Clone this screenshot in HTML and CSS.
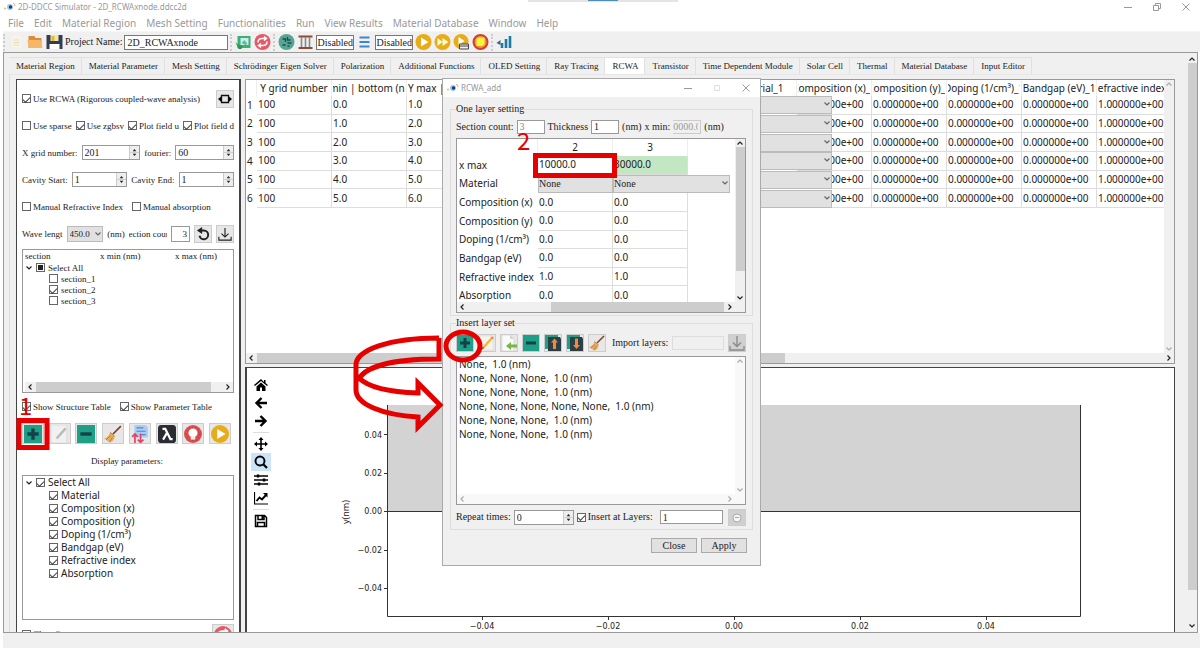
FILE: index.html
```html
<!DOCTYPE html>
<html lang="en">
<head>
<meta charset="utf-8">
<title>2D-DDCC Simulator</title>
<link rel="stylesheet" href="styles.css">
</head>
<body>
<svg class="defs" aria-hidden="true">
  <symbol id="logo" viewBox="0 0 12 10"><circle cx="6" cy="5" r="3" fill="#9cc9ea"/><circle cx="6.500" cy="5" r="1.700" fill="#123f7c"/><circle cx="1" cy="6.500" r="1" fill="#e5c34f"/><path d="M9 1q2 1 2 3" stroke="#e9a06b" fill="none"/></symbol>
  <symbol id="plus" viewBox="0 0 16 16"><path fill="#1f9f86" d="M0 0h16v16H0z"/><path fill="#17414a" d="M6.500 3h3v3.500H13v3H9.500V13h-3V9.500H3v-3h3.500z"/></symbol>
  <symbol id="minus" viewBox="0 0 16 16"><path fill="#1f9f86" d="M0 0h16v16H0z"/><path fill="#17414a" d="M3 6.500h10v3H3z"/></symbol>
  <symbol id="pencil" viewBox="0 0 16 16"><path fill="#f4f3ee" stroke="#d8d6cf" stroke-width=".5" d="M1 1h13v14H1z"/><path d="M4 13l9-10" stroke="#f2bb35" stroke-width="2.600"/><path d="M3 14l1.500-1.500" stroke="#555" stroke-width="1.500"/><path d="M12.500 3.500L14 2" stroke="#e77" stroke-width="2.400"/></symbol>
  <symbol id="pencil-off" viewBox="0 0 16 16"><path fill="#f1f1f1" stroke="#cfcfcf" stroke-width=".5" d="M0 0h14v16H0z"/><path d="M5 12l8-9" stroke="#bbb" stroke-width="2.200"/></symbol>
  <symbol id="broom" viewBox="0 0 16 16"><path d="M8 8l7-7" stroke="#7b3f21" stroke-width="1.500"/><path fill="#e9ad62" d="M5.500 6.500l4 3.500q-.5 5-4.500 5.500L0 12q4-1 5.500-5.500z"/><path d="M5.500 6.500l4 3.500M2 13l4-3.500M5 15l2.500-4" stroke="#b5762f" stroke-width=".8"/></symbol>
  <symbol id="import" viewBox="0 0 16 16"><path fill="#fafafa" stroke="#ccc" stroke-width=".6" d="M1 0h8l4 4v12H1z"/><path fill="#d5d5d5" d="M9 0v4h4z"/><path fill="#76b843" d="M5 11l5-4v2.500h6v3h-6V15z"/></symbol>
  <symbol id="up" viewBox="0 0 16 16"><path fill="#1f9f86" d="M0 0h13v14H0z"/><path fill="#2c3f46" d="M3 2h12l1 2v12H3z"/><path fill="#ef8b3a" d="M9.500 3.500l3.500 4h-2V14H8V7.500H6z"/></symbol>
  <symbol id="down" viewBox="0 0 16 16"><path fill="#1f9f86" d="M0 0h13v14H0z"/><path fill="#2c3f46" d="M3 2h12l1 2v12H3z"/><path fill="#ef8b3a" d="M9.500 14l3.500-4h-2V3.500H8V10H6z"/></symbol>
  <symbol id="sort" viewBox="0 0 16 16"><path fill="#a9cdf3" d="M3 0h10l2 2v9H3z"/><path d="M5 2.500h6M5 5.500h8M9 8.500h4" stroke="#4d85ca"/><path fill="none" stroke="#e83f62" stroke-width="1.500" d="M3.500 16V8M1 10.500L3.500 8 6 10.500M8.500 7.500v8M6 13l2.500 2.500L11 13"/></symbol>
  <symbol id="lambda" viewBox="0 0 16 16"><rect width="16" height="16" rx="3" fill="#2b2b33"/><path d="M4 3.500h2.500L11 12.500h2M8 7l-3.500 6" stroke="#fff" stroke-width="1.900" fill="none"/></symbol>
  <symbol id="life" viewBox="0 0 16 16"><circle cx="8" cy="8" r="8" fill="#dc4f51"/><circle cx="8" cy="8" r="6" fill="none" stroke="#b93c44" stroke-dasharray="1 2"/><circle cx="8" cy="7" r="4" fill="#fff"/><path fill="#eee" d="M6 10h4v3H6z"/></symbol>
  <symbol id="play" viewBox="0 0 16 16"><circle cx="8" cy="8" r="8" fill="#e7ac17"/><path fill="#fff" d="M5.500 3.500L13 8l-7.500 4.500z"/></symbol>
  <symbol id="ff" viewBox="0 0 16 16"><circle cx="8" cy="8" r="8" fill="#e7ac17"/><path fill="#fffbd0" d="M3 4l5 4-5 4zM8 4l6 4-6 4z"/></symbol>
  <symbol id="play-card" viewBox="0 0 16 16"><circle cx="7.500" cy="7.500" r="7.500" fill="#e7ac17"/><path fill="#fff" d="M5 3l6 4-6 4z"/><path fill="#eee" stroke="#444" d="M6 10h9v5H6z"/><path d="M6 12h9" stroke="#444"/></symbol>
  <symbol id="stop" viewBox="0 0 16 16"><circle cx="8" cy="8" r="7" fill="#e89b2c" stroke="#d63d37" stroke-width="2"/><path fill="#fff33b" d="M4 5.500L6 3.500h6v6.500l-2 2H4z"/></symbol>
  <symbol id="refresh" viewBox="0 0 16 16"><circle cx="8" cy="8" r="8" fill="#e95866"/><path fill="none" stroke="#fff" stroke-width="1.500" d="M3.500 8.500q0-4 4-4h4M9.500 2.500l2.500 2-2.500 2M12.500 7.500q0 4-4 4h-4M6.500 13.500l-2.500-2 2.500-2"/></symbol>
  <symbol id="doc" viewBox="0 0 16 16"><path fill="#f7f3e6" d="M3 1h7l3 3v11H3z"/><path d="M5 6h6M5 8.500h6M5 11h6" stroke="#e7dcc0"/></symbol>
  <symbol id="folder" viewBox="0 0 16 16"><path fill="#d98e39" d="M1 2h6l1 2h6v10H1z"/><path fill="#f6b866" d="M0 6h13l2 8H1z"/></symbol>
  <symbol id="save" viewBox="0 0 16 16"><path fill="#323d52" d="M0 1h16v14H0z"/><path fill="#f0e6b3" d="M4 1h8v6H4z"/><path fill="#fff" d="M3 10h10v5H3z"/><path fill="#e6b82f" d="M5 2h3v5H5z"/></symbol>
  <symbol id="photo" viewBox="0 0 16 16"><path fill="#3dae75" d="M2 2h13v12H2z"/><path fill="#c8eef0" d="M5 4h8v7H5z"/><path fill="#62bd92" d="M6 9l3-3 3 4-2 1z"/><path fill="#2f9647" d="M0 8l3 3 4 1-1 3H3z"/></symbol>
  <symbol id="mesh" viewBox="0 0 16 16"><circle cx="8" cy="8" r="8" fill="#57a594"/><path d="M4 5h3v3M9 3v3h3M4 11h3M9 9h4M9 12h2" stroke="#184f4a" stroke-width="1.300" fill="none"/></symbol>
  <symbol id="layers" viewBox="0 0 16 16"><path d="M1 2.500h14M1 14h14" stroke="#8c4c35" stroke-width="1.800"/><path d="M4 3v10M8 3v10M12 3v10" stroke="#888" stroke-width="1.600"/></symbol>
  <symbol id="lines" viewBox="0 0 16 16"><path d="M3 3.500h10M3 8h10M3 12.500h10" stroke="#3d86d3" stroke-width="2.200"/></symbol>
  <symbol id="chart" viewBox="0 0 16 16"><path d="M5.500 14V9M9.500 14V5M13.500 14V2" stroke="#187ba8" stroke-width="2.600"/><path fill="#35657b" d="M0 9l4-3v5z"/></symbol>
  <symbol id="resize" viewBox="0 0 16 16"><path fill="none" stroke="#111" stroke-width="1.500" d="M4 4h8v8H4z"/><path d="M0 8l3.500-3v6zM16 8l-3.500-3v6z"/></symbol>
  <symbol id="undo" viewBox="0 0 16 16"><path fill="none" stroke="#222" stroke-width="2.200" d="M5 4h4a5 5 0 1 1-5 6"/><path fill="#222" d="M1 4l6-4v8z"/></symbol>
  <symbol id="download" viewBox="0 0 16 16"><path fill="none" stroke="currentColor" stroke-width="1.300" d="M8 1v10M4 7.500l4 4 4-4M1 11v4h14v-4"/></symbol>
  <symbol id="al" viewBox="0 0 8 8"><path d="M5.500 1.500L3 4l2.500 2.500" fill="none" stroke="currentColor" stroke-width="1.200"/></symbol>
  <symbol id="ar" viewBox="0 0 8 8"><path d="M2.500 1.500L5 4 2.500 6.500" fill="none" stroke="currentColor" stroke-width="1.200"/></symbol>
  <symbol id="au" viewBox="0 0 8 8"><path d="M1.500 5.500L4 3l2.500 2.500" fill="none" stroke="currentColor" stroke-width="1.200"/></symbol>
  <symbol id="ad" viewBox="0 0 8 8"><path d="M1.500 2.500L4 5l2.500-2.500" fill="none" stroke="currentColor" stroke-width="1.200"/></symbol>
  <symbol id="spin" viewBox="0 0 10 12"><path d="M0 6h10" stroke="#ccc"/><path fill="#222" d="M5 2l2 2.500H3zM5 10l2-2.500H3z"/></symbol>
</svg>

<header class="titlebar">
  <svg class="logo"><use href="#logo"/></svg>
  <h1>2D-DDCC Simulator - 2D_RCWAxnode.ddcc2d</h1>
  <span class="snap"><i></i></span>
  <div class="winctl">
    <svg viewBox="0 0 10 10"><path d="M1 5.500h8"/></svg>
    <svg viewBox="0 0 10 10"><path d="M1.500 3.500h5v5h-5zM3.500 3.500v-2h5v5h-2"/></svg>
    <svg viewBox="0 0 10 10"><path d="M1.500 1.500l7 7M8.500 1.500l-7 7"/></svg>
  </div>
</header>
<nav class="menubar"><button>File</button><button>Edit</button><button>Material Region</button><button>Mesh Setting</button><button>Functionalities</button><button>Run</button><button>View Results</button><button>Material Database</button><button>Window</button><button>Help</button></nav>
<div class="toolbar">
  <i class="grip"></i>
  <svg><use href="#doc"/></svg><svg><use href="#folder"/></svg><svg><use href="#save"/></svg>
  <label for="pname">Project Name:</label><input id="pname" class="pname" value="2D_RCWAxnode">
  <i class="grip"></i>
  <svg><use href="#photo"/></svg><svg><use href="#refresh"/></svg>
  <i class="grip"></i>
  <svg><use href="#mesh"/></svg><svg><use href="#layers"/></svg>
  <input class="state" aria-label="Layer state" value="Disabled">
  <svg><use href="#lines"/></svg>
  <input class="state" aria-label="Line state" value="Disabled">
  <svg><use href="#play"/></svg><svg><use href="#ff"/></svg><svg><use href="#play-card"/></svg><svg><use href="#stop"/></svg>
  <i class="grip"></i>
  <svg><use href="#chart"/></svg>
</div>

<main class="workspace">
  <div class="pages">
    <div class="tabs"><button>Material Region</button><button>Material Parameter</button><button>Mesh Setting</button><button>Schrödinger Eigen Solver</button><button>Polarization</button><button>Additional Functions</button><button>OLED Setting</button><button>Ray Tracing</button><button class="on">RCWA</button><button>Transistor</button><button>Time Dependent Module</button><button>Solar Cell</button><button>Thermal</button><button>Material Database</button><button>Input Editor</button></div>
    <div class="columns">
      <section class="side">
        <div class="row"><label><input type="checkbox" checked>Use RCWA (Rigorous coupled-wave analysis)</label><button class="ib push" aria-label="Resize"><svg><use href="#resize"/></svg></button></div>
        <div class="row spread"><label><input type="checkbox">Use sparse</label><label><input type="checkbox" checked>Use zgbsv</label><label><input type="checkbox" checked>Plot field u</label><label><input type="checkbox" checked>Plot field d</label></div>
        <div class="row"><label for="xg">X grid number:</label><span class="spin grow"><input id="xg" value="201"><svg><use href="#spin"/></svg></span><label for="fo">fourier:</label><span class="spin grow"><input id="fo" value="60"><svg><use href="#spin"/></svg></span></div>
        <div class="row"><label for="cs">Cavity Start:</label><span class="spin grow"><input id="cs" value="1"><svg><use href="#spin"/></svg></span><label for="ce">Cavity End:</label><span class="spin grow"><input id="ce" value="1"><svg><use href="#spin"/></svg></span></div>
        <div class="row wide"><label><input type="checkbox">Manual Refractive Index</label><label><input type="checkbox">Manual absorption</label></div>
        <div class="row"><label for="wl">Wave lengt</label><span class="combo wave"><select id="wl"><option>450.0</option></select><svg><use href="#ad"/></svg></span><span>(nm)</span><label class="cut" for="sc"><span>Section count</span></label><input id="sc" class="cnt" value="3"><button class="ib" aria-label="Reset"><svg><use href="#undo"/></svg></button><button class="ib push" aria-label="Load"><svg><use href="#download"/></svg></button></div>
        <div class="box tree small">
          <div class="heads"><span>section</span><span>x min (nm)</span><span>x max (nm)</span></div>
          <div class="item"><svg><use href="#ad"/></svg><label><input type="checkbox" class="part">Select All</label></div>
          <div class="item sub"><label><input type="checkbox">section_1</label></div>
          <div class="item sub"><label><input type="checkbox" checked>section_2</label></div>
          <div class="item sub"><label><input type="checkbox">section_3</label></div>
          <div class="hbar"><svg><use href="#al"/></svg><i class="t1"></i><svg><use href="#ar"/></svg></div>
        </div>
        <div class="row wide"><label><input type="checkbox" checked>Show Structure Table</label><label><input type="checkbox" checked>Show Parameter Table</label></div>
        <div class="row tools"><button class="ib" aria-label="Add"><svg><use href="#plus"/></svg></button><button class="ib" aria-label="Edit"><svg><use href="#pencil-off"/></svg></button><button class="ib" aria-label="Remove"><svg><use href="#minus"/></svg></button><button class="ib" aria-label="Clear"><svg><use href="#broom"/></svg></button><button class="ib" aria-label="Sort"><svg><use href="#sort"/></svg></button><button class="ib" aria-label="Wavelength"><svg><use href="#lambda"/></svg></button><button class="ib" aria-label="Light"><svg><use href="#life"/></svg></button><button class="ib" aria-label="Run"><svg><use href="#play"/></svg></button></div>
        <div class="row mid">Display parameters:</div>
        <div class="box tree large">
          <div class="item"><svg><use href="#ad"/></svg><label><input type="checkbox" checked>Select All</label></div>
          <div class="item sub"><label><input type="checkbox" checked>Material</label></div>
          <div class="item sub"><label><input type="checkbox" checked>Composition (x)</label></div>
          <div class="item sub"><label><input type="checkbox" checked>Composition (y)</label></div>
          <div class="item sub"><label><input type="checkbox" checked>Doping (1/cm³)</label></div>
          <div class="item sub"><label><input type="checkbox" checked>Bandgap (eV)</label></div>
          <div class="item sub"><label><input type="checkbox" checked>Refractive index</label></div>
          <div class="item sub"><label><input type="checkbox" checked>Absorption</label></div>
        </div>
        <div class="row last"><label><input type="checkbox" checked>Clear figure</label><button class="ib push" aria-label="Refresh"><svg><use href="#refresh"/></svg></button></div>
      </section>

      <div class="right">
        <section class="grid">
          <div class="gridrow">
            <div class="clip">
              <table class="layers">
                <colgroup><col class="n"><col class="c"><col class="c"><col class="c"><col class="gap"><col class="c"><col class="c"><col class="c"><col class="c"><col class="c"><col class="c"></colgroup>
                <thead><tr><th></th><th><div>Y grid number</div></th><th><div>Y min | bottom (nm)</div></th><th class="l"><div>Y max | top (nm)</div></th><th></th><th><div>Material_1</div></th><th><div>Composition (x)_1</div></th><th><div>Composition (y)_1</div></th><th><div>Doping (1/cm³)_1</div></th><th><div>Bandgap (eV)_1</div></th><th><div>Refractive index_1</div></th></tr></thead>
                <tbody>
                  <tr><th>1</th><td>100</td><td>0.0</td><td>1.0</td><td></td><td><span class="combo cell"><select aria-label="Material 1"><option>None</option></select><svg><use href="#ad"/></svg></span></td><td>0.000000e+00</td><td>0.000000e+00</td><td>0.000000e+00</td><td>0.000000e+00</td><td>1.000000e+00</td></tr>
                  <tr><th>2</th><td>100</td><td>1.0</td><td>2.0</td><td></td><td><span class="combo cell"><select aria-label="Material 2"><option>None</option></select><svg><use href="#ad"/></svg></span></td><td>0.000000e+00</td><td>0.000000e+00</td><td>0.000000e+00</td><td>0.000000e+00</td><td>1.000000e+00</td></tr>
                  <tr><th>3</th><td>100</td><td>2.0</td><td>3.0</td><td></td><td><span class="combo cell"><select aria-label="Material 3"><option>None</option></select><svg><use href="#ad"/></svg></span></td><td>0.000000e+00</td><td>0.000000e+00</td><td>0.000000e+00</td><td>0.000000e+00</td><td>1.000000e+00</td></tr>
                  <tr><th>4</th><td>100</td><td>3.0</td><td>4.0</td><td></td><td><span class="combo cell"><select aria-label="Material 4"><option>None</option></select><svg><use href="#ad"/></svg></span></td><td>0.000000e+00</td><td>0.000000e+00</td><td>0.000000e+00</td><td>0.000000e+00</td><td>1.000000e+00</td></tr>
                  <tr><th>5</th><td>100</td><td>4.0</td><td>5.0</td><td></td><td><span class="combo cell"><select aria-label="Material 5"><option>None</option></select><svg><use href="#ad"/></svg></span></td><td>0.000000e+00</td><td>0.000000e+00</td><td>0.000000e+00</td><td>0.000000e+00</td><td>1.000000e+00</td></tr>
                  <tr><th>6</th><td>100</td><td>5.0</td><td>6.0</td><td></td><td><span class="combo cell"><select aria-label="Material 6"><option>None</option></select><svg><use href="#ad"/></svg></span></td><td>0.000000e+00</td><td>0.000000e+00</td><td>0.000000e+00</td><td>0.000000e+00</td><td>1.000000e+00</td></tr>
                </tbody>
              </table>
            </div>
            <div class="vbar faint"><svg><use href="#au"/></svg><i></i><svg><use href="#ad"/></svg></div>
          </div>
          <div class="hbar"><svg><use href="#al"/></svg><i class="t2"></i><svg><use href="#ar"/></svg></div>
        </section>
        <section class="plot">
          <div class="nav">
            <svg viewBox="0 0 14 14"><path d="M7 1L0 7l1 1 6-5 6 5 1-1-2.500-2V2H10v2zM7 4.500L2.500 8.500V13H6V9.500h2V13h3.500V8.500z"/></svg>
            <svg viewBox="0 0 14 14"><path d="M13 7H3M7.500 2L2.500 7l5 5" fill="none" stroke="#000" stroke-width="2.400"/></svg>
            <svg viewBox="0 0 14 14"><path d="M1 7h10M6.500 2l5 5-5 5" fill="none" stroke="#000" stroke-width="2.400"/></svg>
            <hr>
            <svg viewBox="0 0 14 14"><path d="M7 1v12M1 7h12" stroke="#000" stroke-width="1.600"/><path d="M7 0l2.500 3h-5zM7 14l2.500-3h-5zM0 7l3-2.500v5zM14 7l-3-2.500v5z"/></svg>
            <svg class="sel" viewBox="0 0 14 14"><circle cx="6" cy="6" r="4.500" fill="none" stroke="#000" stroke-width="1.900"/><path d="M9.500 9.500L13 13" stroke="#000" stroke-width="2.300"/></svg>
            <svg viewBox="0 0 14 14"><path d="M0 3h14M0 7h14M0 11h14" stroke="#000" stroke-width="1.400"/><path d="M4 1.500v3M10 5.500v3M5 9.500v3" stroke="#000" stroke-width="2.400"/></svg>
            <svg viewBox="0 0 14 14"><path d="M.5 1v12H14" fill="none" stroke="#000" stroke-width="1.200"/><path d="M2.500 10l3-3.500 2.500 2L12 4" fill="none" stroke="#000" stroke-width="1.900"/><path d="M9 2h4.500v4.500z"/></svg>
            <hr>
            <svg viewBox="0 0 14 14"><path d="M1.500 1.500h9l2 2v9h-11zM4 1.500v4h6v-4M3.500 12.500v-4h7v4" fill="none" stroke="#000" stroke-width="1.500"/><path d="M7.500 2h2v3h-2z"/></svg>
          </div>
          <svg class="axes">
            <path fill="#d3d3d3" d="M101 37h693v106H101z"/>
            <path class="ax" d="M101.500 37v211.500h693V37M101 143.500h693"/>
            <path class="ax" d="M98 66.500h3M98 105.500h3M98 143.500h3M98 182.500h3M98 220.500h3M196.500 249v3M322.500 249v3M448.500 249v3M574.500 249v3M700.500 249v3"/>
            <g text-anchor="end"><text x="96" y="70">0.04</text><text x="96" y="108">0.02</text><text x="96" y="146">0.00</text><text x="96" y="185">−0.02</text><text x="96" y="223">−0.04</text></g>
            <g text-anchor="middle"><text x="196" y="261">−0.04</text><text x="322" y="261">−0.02</text><text x="448" y="261">0.00</text><text x="574" y="261">0.02</text><text x="700" y="261">0.04</text></g>
            <text class="yl" transform="translate(63 144) rotate(-90)" text-anchor="middle">y(nm)</text>
          </svg>
        </section>
      </div>
    </div>
  </div>
  <div class="vbar outer"><svg><use href="#au"/></svg><i></i><svg><use href="#ad"/></svg></div>
</main>
<footer class="status"></footer>

<div class="dialog" role="dialog" aria-label="RCWA_add">
  <div class="dtitle"><svg class="logo"><use href="#logo"/></svg><h2>RCWA_add</h2>
    <div class="winctl"><svg viewBox="0 0 10 10"><path d="M1 5.500h8"/></svg><svg class="dim" viewBox="0 0 10 10"><path d="M2.500 2.500h5v5h-5z"/></svg><svg viewBox="0 0 10 10"><path d="M1.500 1.500l7 7M8.500 1.500l-7 7"/></svg></div>
  </div>
  <div class="dbody">
    <fieldset>
      <legend>One layer setting</legend>
      <div class="drow"><label for="dsc">Section count:</label><input id="dsc" class="w28 off" value="3"><label for="dth">Thickness</label><input id="dth" class="w28" value="1"><span>(nm)</span><label for="dxm">x min:</label><span class="xmin"><input id="dxm" value="20000.0" disabled></span><span>(nm)</span></div>
      <div class="box params">
        <div class="gridrow">
          <div class="clip">
            <table class="ptable">
              <colgroup><col class="h"><col class="c"><col class="c"></colgroup>
              <thead><tr><th></th><th>2</th><th>3</th></tr></thead>
              <tbody>
                <tr><th>x max</th><td>10000.0</td><td class="green">30000.0</td></tr>
                <tr><th>Material</th><td><span class="combo pcell"><select aria-label="Material, section 2"><option>None</option></select></span></td><td><span class="combo pcell pwide"><select aria-label="Material, section 3"><option>None</option></select><svg><use href="#ad"/></svg></span></td></tr>
                <tr><th>Composition (x)</th><td>0.0</td><td>0.0</td></tr>
                <tr><th>Composition (y)</th><td>0.0</td><td>0.0</td></tr>
                <tr><th>Doping (1/cm³)</th><td>0.0</td><td>0.0</td></tr>
                <tr><th>Bandgap (eV)</th><td>0.0</td><td>0.0</td></tr>
                <tr><th>Refractive index</th><td>1.0</td><td>1.0</td></tr>
                <tr><th>Absorption</th><td>0.0</td><td>0.0</td></tr>
              </tbody>
            </table>
          </div>
          <div class="vbar pv"><svg><use href="#au"/></svg><i></i><svg><use href="#ad"/></svg></div>
        </div>
        <div class="hbar phb"><svg><use href="#al"/></svg><i class="t3"></i><svg><use href="#ar"/></svg></div>
      </div>
    </fieldset>
    <fieldset>
      <legend>Insert layer set</legend>
      <div class="dtools"><button class="ib" aria-label="Add layer"><svg><use href="#plus"/></svg></button><button class="ib" aria-label="Edit layer"><svg><use href="#pencil"/></svg></button><button class="ib" aria-label="Insert layer"><svg><use href="#import"/></svg></button><button class="ib" aria-label="Remove layer"><svg><use href="#minus"/></svg></button><button class="ib" aria-label="Move up"><svg><use href="#up"/></svg></button><button class="ib" aria-label="Move down"><svg><use href="#down"/></svg></button><button class="ib" aria-label="Clear layers"><svg><use href="#broom"/></svg></button><label for="imp">Import layers:</label><input id="imp" class="imp" disabled><button class="ib off" aria-label="Import" disabled><svg><use href="#download"/></svg></button></div>
      <div class="box list">
        <div class="gridrow">
          <ul><li>None,&nbsp; 1.0 (nm)</li><li>None, None, None,&nbsp; 1.0 (nm)</li><li>None, None, None,&nbsp; 1.0 (nm)</li><li>None, None, None, None, None,&nbsp; 1.0 (nm)</li><li>None, None, None,&nbsp; 1.0 (nm)</li><li>None, None, None,&nbsp; 1.0 (nm)</li></ul>
          <div class="vbar faint"><svg><use href="#au"/></svg><i></i><svg><use href="#ad"/></svg></div>
        </div>
        <div class="hbar phb faint"><svg><use href="#al"/></svg><i></i><svg><use href="#ar"/></svg></div>
      </div>
      <div class="drow foot"><label for="rep">Repeat times:</label><span class="spin rep"><input id="rep" value="0"><svg><use href="#spin"/></svg></span><label><input type="checkbox" checked>Insert at Layers:</label><input class="at" aria-label="Layer number" value="1"><button class="ib off" aria-label="Insert" disabled><svg viewBox="0 0 16 16"><circle cx="8" cy="8" r="4" fill="#f5f5f5" stroke="#aaa"/><path d="M6 7.500h4" stroke="#aaa"/></svg></button></div>
    </fieldset>
    <div class="actions"><button>Close</button><button>Apply</button></div>
  </div>
</div>

<svg class="marks" viewBox="0 0 1200 648" aria-hidden="true">
  <path d="M19 420.500h28v27H19zM535.500 155.500h79v20h-79z"/>
  <ellipse cx="463" cy="346" rx="17" ry="14"/>
  <path d="M439 338v21c-48 0-76 8-81 22M439 338c-50 0-83 12-83 27v25c0 14 26 25 62 27v10l22-22-22-22v10c-29-1-50-6-59-15"/>
  <text x="19" y="415">1</text><text x="517" y="150">2</text>
</svg>
</body>
</html>
```
FILE: styles.css
```css
* { box-sizing: border-box; }
body {
  margin: 0;
  height: 100vh;
  display: flex;
  flex-direction: column;
  overflow: hidden;
  position: relative;
  background: #fff;
  color: #222;
  font: 9px/12px "Liberation Serif", serif;
  white-space: nowrap;
}
.defs { display: none; }
h1, h2 { margin: 0; font: 8px/12px "Noto Sans", sans-serif; color: #999; }
input, select, button { font: inherit; color: inherit; margin: 0; padding: 0; border-radius: 0; }
input { border: 1px solid #999; background: #fff; min-width: 0; padding: 0 2px; height: 14px; }
select { appearance: none; border: 1px solid #bbb; background: #e1e1e1; width: 100%; height: 100%; padding: 0 2px; }
input[type="checkbox"] {
  appearance: none;
  width: 9px;
  height: 9px;
  flex: none;
  padding: 0;
  border: 1px solid #666;
  display: grid;
  place-items: center;
}
input[type="checkbox"]:checked::before {
  content: "";
  width: 6px;
  height: 3px;
  border: solid #444;
  border-width: 0 0 1px 1px;
  transform: rotate(-45deg);
}
.part::before { content: ""; width: 5px; height: 5px; background: #222; }
label { display: flex; align-items: center; gap: 2px; }

.titlebar { display: flex; align-items: center; gap: 2px; height: 14px; padding-left: 4px; }
.logo { width: 12px; height: 10px; }
.snap { flex: 0 0 150px; margin-left: 339px; height: 2px; background: #e4e4e4; align-self: flex-start; display: flex; justify-content: center; }
.snap i { width: 30px; background: #4d8dc4; height: 1px; }
.winctl { margin-left: auto; display: flex; gap: 19px; padding-right: 9px; }
.winctl svg { width: 10px; height: 10px; fill: none; stroke: #999; stroke-width: 1; }
.winctl .dim { opacity: .3; }
.menubar { display: flex; gap: 10px; height: 17px; align-items: center; padding-left: 8px; color: #999; font: 10px/14px "Noto Sans", sans-serif; }
.menubar button { border: 0; background: none; }
.toolbar { display: flex; align-items: center; gap: 2px; height: 21px; margin-left: 3px; background: #f0f0f0; font-size: 10px; border-top: 1px solid #f6f6f6; }
.toolbar svg { width: 17px; height: 16px; }
.grip { width: 3px; height: 17px; border-left: 2px dotted #ccc; }
.toolbar input { height: 15px; border-color: #777; }
.toolbar .pname { width: 104px; }
.toolbar .state { width: 38px; padding: 0; }

.workspace { flex: 1; min-height: 0; display: flex; margin: 0 2px 0 3px; border: 1px solid #999; background: #f0f0f0; overflow: hidden; }
.pages { flex: 1; min-width: 0; display: flex; flex-direction: column; padding: 4px 12px 0 5px; }
.tabs { display: flex; height: 17px; }
.tabs button { padding: 0 6px 0 7px; line-height: 16px; border: solid #e0e0e0; border-width: 1px 1px 0 0; background: none; }
.tabs .on { background: #fff; }
.columns { flex: 1; min-height: 0; display: flex; gap: 4px; padding: 4px 0 0 6px; border-left: 1px solid #ddd; border-top: 1px solid #e6e6e6; }
.side { flex: 0 0 225px; display: flex; flex-direction: column; padding: 5px 5px 0; border: solid #444; border-width: 1px 2px 0 1px; background: #fff; overflow: hidden; }
.row { flex: 0 0 27px; display: flex; align-items: center; gap: 4px; }
.row.spread { gap: 0; justify-content: space-between; }
.row.wide { gap: 9px; }
.row.mid { justify-content: center; font-size: 9px; padding-right: 2px; }
.row.tools { justify-content: space-between; padding-right: 3px; }
.row.last { align-items: flex-start; padding-top: 4px; }
.last label { padding-top: 4px; }
.ib { width: 22px; height: 21px; display: grid; place-items: center; border: 1px solid #ccc; background: #e7e7e7; flex: none; }
.ib svg { width: 16px; height: 16px; }
.row > .ib { width: 18px; height: 18px; }
.row > .ib svg { width: 14px; height: 14px; }
.row.tools > .ib { width: 22px; height: 21px; }
.row.tools > .ib svg { width: 18px; height: 18px; }
.row.last > .ib { width: 22px; height: 22px; }
.row.last > .ib svg { width: 18px; height: 18px; }
.push { margin-left: auto; }
.spin { display: flex; align-items: stretch; height: 15px; border: 1px solid #999; min-width: 0; background: #fff; font-size: 10px; }
.spin input { border: 0; flex: 1; width: 0; height: 13px; }
.spin svg { width: 10px; height: 13px; background: #eee; border-left: 1px solid #ccc; }
.grow { flex: 1; }
.combo { display: flex; position: relative; }
.combo svg { position: absolute; right: 1px; top: 4px; width: 8px; height: 8px; color: #666; }
.wave { width: 38px; height: 16px; }
.cut { width: 40px; overflow: hidden; justify-content: center; }
.cnt { width: 19px; text-align: right; height: 16px; }
.box { border: 1px solid #999; background: #fff; }
.tree { display: flex; flex-direction: column; padding-left: 2px; }
.heads { display: grid; grid-template-columns: 75px 75px 1fr; height: 12px; line-height: 13px; }
.item { display: flex; align-items: center; gap: 3px; height: 11px; }
.item svg { width: 8px; height: 8px; }
.tree label { gap: 3px; }
.sub { padding-left: 24px; }
.small { flex: 0 0 144px; margin-top: 2px; }
.large { flex: 0 0 145px; margin-top: 1px; font: 10px/13px "Noto Sans", sans-serif; }
.large .item { height: 13px; }
.hbar { margin-top: auto; flex: 0 0 10px; height: 10px; display: flex; align-items: center; justify-content: space-between; gap: 2px; background: #f0f0f0; padding: 0 1px; }
.hbar svg, .vbar svg { width: 8px; height: 8px; flex: none; }
.hbar i { height: 10px; background: #cdcdcd; }
.t1 { flex: 1; margin-right: 11px; }
.t2 { width: 57%; margin-right: auto; }
.t3 { width: 173px; margin-left: auto; }
.phb { padding-right: 11px; }
.vbar { flex: 0 0 10px; display: flex; flex-direction: column; align-items: center; justify-content: space-between; background: #f0f0f0; }
.vbar i { width: 9px; background: #cdcdcd; }
.faint { color: #aaa; }
.outer { padding: 2px 0; }
.outer i { height: 527px; margin-bottom: auto; }
.pv i { height: 124px; margin-bottom: auto; }

.right { flex: 1; min-width: 0; display: flex; flex-direction: column; gap: 3px; }
.grid { flex: 0 0 285px; display: flex; flex-direction: column; border: 1px solid #999; background: #fff; }
.gridrow { flex: 1; min-height: 0; display: flex; }
.clip { flex: 1; min-width: 0; overflow: hidden; }
table { table-layout: fixed; border-spacing: 0; font: 10px/13px "Noto Sans", sans-serif; }
th, td { padding: 0 2px; font-weight: 400; text-align: left; vertical-align: middle; }
td { border: solid #ddd; border-width: 0 1px 1px 0; }
tbody tr { height: 18px; }
.layers { width: 926px; height: 128px; }
.layers thead tr { height: 16px; }
.layers thead th { padding: 0 1px; border-right: 1px solid #eee; }
.layers thead div { display: flex; justify-content: center; overflow: hidden; }
.layers thead .l div { justify-content: flex-start; }
.layers tbody th { padding: 0 1px; }
.layers td { padding: 0 1px; }
td:has(.combo) { padding: 0; border-width: 0; }
.n { width: 11px; }
.c { width: 75px; }
.gap { width: 240px; }
.cell { width: 110px; height: 18px; }

.plot { flex: 1; min-height: 0; display: flex; gap: 15px; padding: 0 0 0 4px; border: solid #444; border-width: 1px 1px 0 2px; background: #fff; overflow: hidden; }
.nav { flex: 0 0 20px; display: flex; flex-direction: column; align-items: center; padding-top: 8px; }
.nav svg { width: 20px; height: 18px; padding: 2px 3px; flex: none; }
.nav .sel { background: #cce4f7; }
.nav hr { width: 16px; margin: 2px 0; border: 0; border-top: 1px solid #ddd; flex: none; }
.axes { flex: 1; min-width: 0; height: 100%; font: 8px "DejaVu Sans", sans-serif; fill: #222; }
.yl { font: 9px "Noto Sans", sans-serif; }
.ax { fill: none; stroke: #333; stroke-width: 1; }
.status { flex: 0 0 15px; margin-left: 3px; background: #f0f0f0; }

.dialog { position: absolute; left: 442px; top: 78px; width: 319px; border: 1px solid #aaa; background: #f0f0f0; font-size: 10px; }
.dtitle { display: flex; align-items: center; gap: 2px; height: 18px; background: #fff; padding-left: 4px; }
.dbody { padding: 6px 7px 12px; display: flex; flex-direction: column; gap: 1px; }
fieldset { margin: 0; padding: 0 6px 2px 5px; border: 1px solid #ddd; min-width: 0; }
fieldset + fieldset { padding-bottom: 0; }
legend { padding: 0; line-height: 12px; }
.drow { display: flex; align-items: center; gap: 3px; height: 23px; }
.w28 { width: 28px; }
.off { color: #888; }
.xmin { width: 28px; overflow: hidden; display: flex; justify-content: flex-end; }
.xmin input { flex: none; width: 36px; color: #999; background: #f0f0f0; border-color: #ccc; }
.params { display: flex; flex-direction: column; height: 175px; }
.ptable { width: 231px; height: 166px; }
.ptable thead tr { height: 17px; }
.ptable thead th { text-align: center; border-right: 1px solid #eee; }
.ptable .h { width: 81px; }
.ptable td { padding: 0 1px; }
.ptable .green { background: #c3e6c3; }
.ptable td:has(.combo) { padding: 0; }
.pcell { height: 18px; width: 75px; font: 10px/13px "Liberation Serif", serif; }
.pcell select { padding: 0; }
.pwide { width: 117px; }
.dtools { display: flex; align-items: center; gap: 4px; height: 27px; }
.dtools .ib { width: 18px; height: 18px; }
.dtools .ib svg { width: 16px; height: 16px; }
.dtools .ib.off, .foot .ib { background: #d0d0d0; }
.dtools label { margin-left: 2px; }
.imp { flex: 1; background: #f0f0f0; border-color: #ddd; }
.list { display: flex; flex-direction: column; height: 149px; }
.list .hbar, .list .vbar { background: #f8f8f8; }
ul { flex: 1; margin: 0; padding: 0 2px; list-style: none; font: 10px/14px "Noto Sans", sans-serif; }
.foot { height: 24px; }
.rep { width: 60px; }
.at { flex: 1; margin-left: 4px; }
.foot .ib { width: 18px; height: 17px; margin-left: 2px; }
.actions { display: flex; justify-content: flex-end; gap: 4px; padding: 7px 6px 0 0; }
.actions button { width: 46px; height: 15px; border: 1px solid #aaa; background: #e1e1e1; }

.marks { position: absolute; left: 0; top: 0; width: 1200px; height: 648px; pointer-events: none; fill: none; stroke: #e60000; stroke-width: 5; }
.marks text { fill: #e60000; stroke: none; font: 24px "Noto Sans CJK SC", sans-serif; }
```
